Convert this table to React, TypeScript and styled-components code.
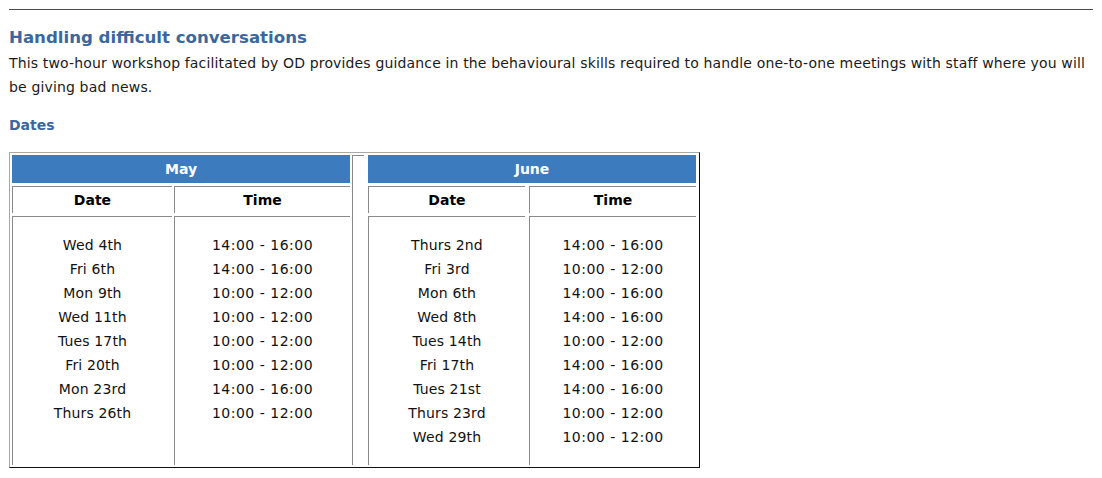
import React from 'react';
import styled, { createGlobalStyle } from 'styled-components';

const GlobalStyle = createGlobalStyle`
	body {
		margin: 0;
		padding: 9px;
		background: #fff;
		font-family: 'DejaVu Sans', Verdana, sans-serif;
		font-size: 14px;
		color: #1a1a1a;
	}
`;

type Session = { date: string; time: string };

type Month = {
	name: string;
	dateWidth: number;
	timeWidth: number;
	gap: number;
	sessions: Session[];
};

const months: Month[] = [
	{
		name: 'May',
		dateWidth: 160,
		timeWidth: 176,
		gap: 2,
		sessions: [
			{ date: 'Wed 4th', time: '14:00 - 16:00' },
			{ date: 'Fri 6th', time: '14:00 - 16:00' },
			{ date: 'Mon 9th', time: '10:00 - 12:00' },
			{ date: 'Wed 11th', time: '10:00 - 12:00' },
			{ date: 'Tues 17th', time: '10:00 - 12:00' },
			{ date: 'Fri 20th', time: '10:00 - 12:00' },
			{ date: 'Mon 23rd', time: '14:00 - 16:00' },
			{ date: 'Thurs 26th', time: '10:00 - 12:00' },
		],
	},
	{
		name: 'June',
		dateWidth: 157,
		timeWidth: 167,
		gap: 4,
		sessions: [
			{ date: 'Thurs 2nd', time: '14:00 - 16:00' },
			{ date: 'Fri 3rd', time: '10:00 - 12:00' },
			{ date: 'Mon 6th', time: '14:00 - 16:00' },
			{ date: 'Wed 8th', time: '14:00 - 16:00' },
			{ date: 'Tues 14th', time: '10:00 - 12:00' },
			{ date: 'Fri 17th', time: '14:00 - 16:00' },
			{ date: 'Tues 21st', time: '14:00 - 16:00' },
			{ date: 'Thurs 23rd', time: '10:00 - 12:00' },
			{ date: 'Wed 29th', time: '10:00 - 12:00' },
		],
	},
];

const MonthPanel: React.FC<{ month: Month }> = ({ month }) => (
	<Panel columns={`${month.dateWidth}px ${month.timeWidth}px`} colGap={month.gap}>
		<MonthHeader>{month.name}</MonthHeader>
		<ColumnHeader>Date</ColumnHeader>
		<ColumnHeader>Time</ColumnHeader>
		<BodyCell>
			{month.sessions.map((s) => (
				<Line key={s.date}>{s.date}</Line>
			))}
		</BodyCell>
		<BodyCell>
			{month.sessions.map((s) => (
				<Line key={s.date} wide>
					{s.time}
				</Line>
			))}
		</BodyCell>
	</Panel>
);

const App: React.FC = () => (
	<>
		<GlobalStyle />
		<Rule />
		<Title>Handling difficult conversations</Title>
		<Intro>
			This two-hour workshop facilitated by OD provides guidance in the behavioural skills required to
			handle one-to-one meetings with staff where you will be giving bad news.
		</Intro>
		<SubTitle>Dates</SubTitle>
		<DatesTable>
			<MonthPanel month={months[0]} />
			<Spacer />
			<MonthPanel month={months[1]} />
		</DatesTable>
	</>
);

export default App;

const Rule = styled.hr`
	margin: 0;
	border: 0;
	border-top: 1px solid #4a4a4a;
	height: 0;
`;

const Title = styled.h2`
	margin: 18px 0 0;
	font-size: 16.6px;
	line-height: 20px;
	font-weight: bold;
	color: #3a679e;
`;

const Intro = styled.p`
	margin: 3px 0 0;
	line-height: 24px;
	letter-spacing: 0.15px;
`;

const SubTitle = styled.h3`
	margin: 16px 0 0;
	font-size: 14px;
	line-height: 20px;
	font-weight: bold;
	color: #3a679e;
`;

const DatesTable = styled.div`
	display: inline-flex;
	align-items: stretch;
	margin-top: 17px;
	padding: 2px 3px 2px 2px;
	border-top: 1px solid #a8a8a8;
	border-left: 1px solid #a8a8a8;
	border-right: 1px solid #111;
	border-bottom: 1px solid #111;
`;

const Panel = styled.div<{ columns: string; colGap: number }>`
	display: grid;
	grid-template-columns: ${(p) => p.columns};
	grid-template-rows: 28px 27px 1fr;
	column-gap: ${(p) => p.colGap}px;
	row-gap: 3px;
`;

const Spacer = styled.div`
	width: 11px;
	margin: 0 4px 0 2px;
	border-top: 1px solid #8a8a8a;
	border-left: 1px solid #8a8a8a;
`;

const MonthHeader = styled.div`
	grid-column: 1 / span 2;
	background: #3d7bbf;
	color: #fff;
	font-weight: bold;
	text-align: center;
	line-height: 28px;
`;

const ColumnHeader = styled.div`
	border-top: 1px solid #8a8a8a;
	border-left: 1px solid #8a8a8a;
	font-weight: bold;
	color: #000;
	text-align: center;
	line-height: 26px;
`;

const BodyCell = styled.div`
	border-top: 1px solid #8a8a8a;
	border-left: 1px solid #8a8a8a;
	padding: 16px 0 16px;
	text-align: center;
	color: #111;
`;

const Line = styled.div<{ wide?: boolean }>`
	line-height: 24px;
	letter-spacing: ${(p) => (p.wide ? '0.5px' : '0.15px')};
`;
